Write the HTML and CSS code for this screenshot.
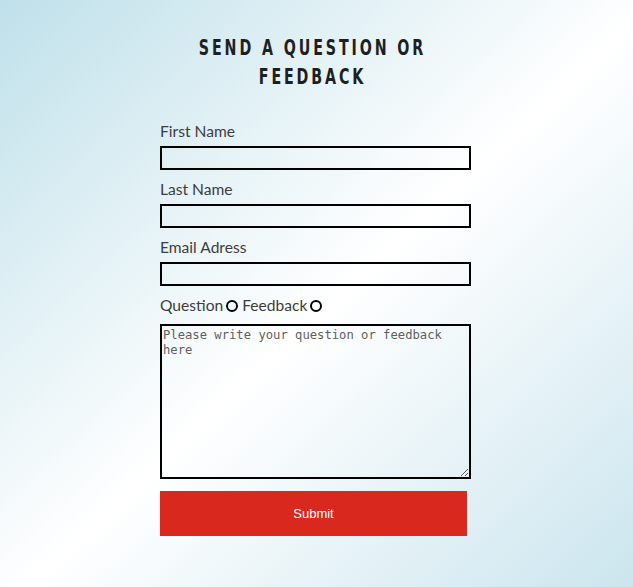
FILE: index.html
```html
<!DOCTYPE html>
<html lang="en">
<head>
<meta charset="utf-8">
<title>Contact</title>
<link rel="stylesheet" href="styles.css">
</head>
<body>
<main class="page">
  <h1 class="title">Send a question or feedback</h1>
  <form class="form">
    <label class="label" for="first">First Name</label>
    <input class="field" id="first" type="text">
    <label class="label" for="last">Last Name</label>
    <input class="field" id="last" type="text">
    <label class="label" for="email">Email Adress</label>
    <input class="field" id="email" type="email">
    <div class="choice">
      <label class="choice-label" for="q">Question</label><input class="radio" id="q" type="radio" name="kind">
      <label class="choice-label" for="f">Feedback</label><input class="radio" id="f" type="radio" name="kind">
    </div>
    <textarea class="message" placeholder="Please write your question or feedback here"></textarea>
    <button class="submit" type="button">Submit</button>
  </form>
</main>
</body>
</html>
```

FILE: styles.css
```css
html {
  min-height: 100%;
  background: linear-gradient(to bottom right, #bfe0ea 0%, #ffffff 52%, #cbe5ee 100%);
}
body {
  margin: 0;
  min-height: 587px;
  font-family: Lato, "Open Sans", sans-serif;
}
.page {
  width: 313px;
  margin: 0 auto;
  padding-top: 33px;
}
.title {
  margin: 0 -16px 30px -24px;
  font-family: "DejaVu Sans Condensed", "DejaVu Sans", sans-serif;
  font-stretch: condensed;
  font-weight: bold;
  font-size: 22px;
  line-height: 29px;
  letter-spacing: 4px;
  text-align: center;
  text-transform: uppercase;
  color: #1f1f1f;
  transform: scaleX(0.72);
  transform-origin: 50% 50%;
}
.form {
  display: flex;
  flex-direction: column;
  align-items: flex-start;
}
.label {
  font-size: 15.6px;
  font-weight: 400;
  line-height: 19px;
  color: #3d3d3d;
  padding-top: 1px;
  margin-bottom: 5px;
}
.field {
  box-sizing: border-box;
  width: 311px;
  height: 24px;
  margin: 0 0 9px;
  border: 2px solid #000;
  background: transparent;
  padding: 0 4px;
  font: 14px Lato, sans-serif;
}
.choice {
  display: flex;
  align-items: center;
  height: 19px;
  padding-top: 1px;
  margin-bottom: 9px;
}
.choice-label {
  font-size: 15.6px;
  font-weight: 400;
  line-height: 19px;
  color: #3d3d3d;
}
.radio {
  appearance: none;
  -webkit-appearance: none;
  box-sizing: border-box;
  width: 12px;
  height: 12px;
  margin: 0 4px 0 3px;
  border: 2px solid #000;
  border-radius: 50%;
  background: transparent;
}
.message {
  box-sizing: border-box;
  width: 311px;
  height: 155px;
  margin: 0 0 12px;
  border: 2px solid #000;
  background: transparent;
  padding: 2px 1px;
  font-family: "DejaVu Sans Mono", "Liberation Mono", monospace;
  font-size: 12.2px;
  line-height: 15px;
  resize: both;
}
.message::placeholder {
  color: #5e5e5e;
}
.submit {
  width: 307px;
  height: 45px;
  border: 0;
  background: #d9281e;
  color: #fff;
  font-family: "Liberation Sans", Arial, sans-serif;
  font-size: 13px;
}
```
